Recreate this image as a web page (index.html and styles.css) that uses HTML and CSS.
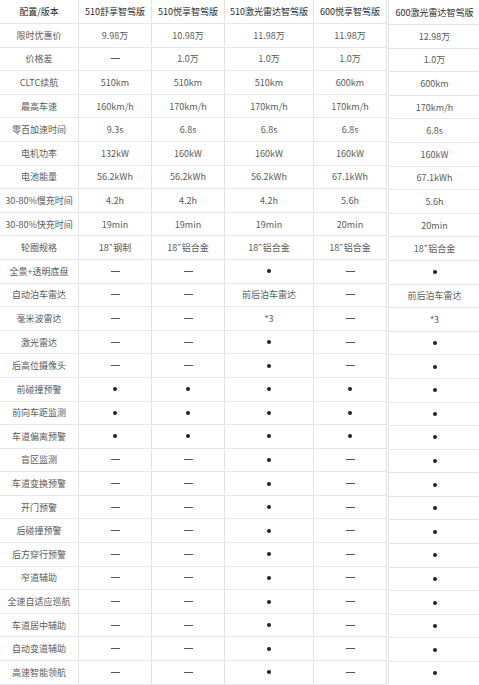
FILE: index.html
```html
<!DOCTYPE html>
<html lang="zh">
<head>
<meta charset="utf-8">
<link rel="stylesheet" href="styles.css">
</head>
<body>
<div class="wrap">
  <div class="main">
    <div class="c h">配置/版本</div><div class="c h">510舒享智驾版</div><div class="c h">510悦享智驾版</div><div class="c h">510激光雷达智驾版</div><div class="c h">600悦享智驾版</div>
    <div class="c">限时优惠价</div><div class="c">9.98万</div><div class="c">10.98万</div><div class="c">11.98万</div><div class="c">11.98万</div>
    <div class="c">价格差</div><div class="c"><span class="dash"></span></div><div class="c">1.0万</div><div class="c">1.0万</div><div class="c">1.0万</div>
    <div class="c">CLTC续航</div><div class="c">510km</div><div class="c">510km</div><div class="c">510km</div><div class="c">600km</div>
    <div class="c">最高车速</div><div class="c">160km/h</div><div class="c">170km/h</div><div class="c">170km/h</div><div class="c">170km/h</div>
    <div class="c">零百加速时间</div><div class="c">9.3s</div><div class="c">6.8s</div><div class="c">6.8s</div><div class="c">6.8s</div>
    <div class="c">电机功率</div><div class="c">132kW</div><div class="c">160kW</div><div class="c">160kW</div><div class="c">160kW</div>
    <div class="c">电池能量</div><div class="c">56.2kWh</div><div class="c">56.2kWh</div><div class="c">56.2kWh</div><div class="c">67.1kWh</div>
    <div class="c">30-80%慢充时间</div><div class="c">4.2h</div><div class="c">4.2h</div><div class="c">4.2h</div><div class="c">5.6h</div>
    <div class="c">30-80%快充时间</div><div class="c">19min</div><div class="c">19min</div><div class="c">19min</div><div class="c">20min</div>
    <div class="c">轮圈规格</div><div class="c">18<span class="q">”</span>钢制</div><div class="c">18<span class="q">”</span>铝合金</div><div class="c">18<span class="q">”</span>铝合金</div><div class="c">18<span class="q">”</span>铝合金</div>
    <div class="c">全景+透明底盘</div><div class="c"><span class="dash"></span></div><div class="c"><span class="dash"></span></div><div class="c"><span class="dot"></span></div><div class="c"><span class="dash"></span></div>
    <div class="c">自动泊车雷达</div><div class="c"><span class="dash"></span></div><div class="c"><span class="dash"></span></div><div class="c">前后泊车雷达</div><div class="c"><span class="dash"></span></div>
    <div class="c">毫米波雷达</div><div class="c"><span class="dash"></span></div><div class="c"><span class="dash"></span></div><div class="c">*3</div><div class="c"><span class="dash"></span></div>
    <div class="c">激光雷达</div><div class="c"><span class="dash"></span></div><div class="c"><span class="dash"></span></div><div class="c"><span class="dot"></span></div><div class="c"><span class="dash"></span></div>
    <div class="c">后高位摄像头</div><div class="c"><span class="dash"></span></div><div class="c"><span class="dash"></span></div><div class="c"><span class="dot"></span></div><div class="c"><span class="dash"></span></div>
    <div class="c">前碰撞预警</div><div class="c"><span class="dot"></span></div><div class="c"><span class="dot"></span></div><div class="c"><span class="dot"></span></div><div class="c"><span class="dot"></span></div>
    <div class="c">前向车距监测</div><div class="c"><span class="dot"></span></div><div class="c"><span class="dot"></span></div><div class="c"><span class="dot"></span></div><div class="c"><span class="dot"></span></div>
    <div class="c">车道偏离预警</div><div class="c"><span class="dot"></span></div><div class="c"><span class="dot"></span></div><div class="c"><span class="dot"></span></div><div class="c"><span class="dot"></span></div>
    <div class="c">盲区监测</div><div class="c"><span class="dash"></span></div><div class="c"><span class="dash"></span></div><div class="c"><span class="dot"></span></div><div class="c"><span class="dash"></span></div>
    <div class="c">车道变换预警</div><div class="c"><span class="dash"></span></div><div class="c"><span class="dash"></span></div><div class="c"><span class="dot"></span></div><div class="c"><span class="dash"></span></div>
    <div class="c">开门预警</div><div class="c"><span class="dash"></span></div><div class="c"><span class="dash"></span></div><div class="c"><span class="dot"></span></div><div class="c"><span class="dash"></span></div>
    <div class="c">后碰撞预警</div><div class="c"><span class="dash"></span></div><div class="c"><span class="dash"></span></div><div class="c"><span class="dot"></span></div><div class="c"><span class="dash"></span></div>
    <div class="c">后方穿行预警</div><div class="c"><span class="dash"></span></div><div class="c"><span class="dash"></span></div><div class="c"><span class="dot"></span></div><div class="c"><span class="dash"></span></div>
    <div class="c">窄道辅助</div><div class="c"><span class="dash"></span></div><div class="c"><span class="dash"></span></div><div class="c"><span class="dot"></span></div><div class="c"><span class="dash"></span></div>
    <div class="c">全速自适应巡航</div><div class="c"><span class="dash"></span></div><div class="c"><span class="dash"></span></div><div class="c"><span class="dot"></span></div><div class="c"><span class="dash"></span></div>
    <div class="c">车道居中辅助</div><div class="c"><span class="dash"></span></div><div class="c"><span class="dash"></span></div><div class="c"><span class="dot"></span></div><div class="c"><span class="dash"></span></div>
    <div class="c">自动变道辅助</div><div class="c"><span class="dash"></span></div><div class="c"><span class="dash"></span></div><div class="c"><span class="dot"></span></div><div class="c"><span class="dash"></span></div>
    <div class="c">高速智能领航</div><div class="c"><span class="dash"></span></div><div class="c"><span class="dash"></span></div><div class="c"><span class="dot"></span></div><div class="c"><span class="dash"></span></div>
  </div>
  <div class="side">
    <div class="c h">600激光雷达智驾版</div>
    <div class="c">12.98万</div>
    <div class="c">1.0万</div>
    <div class="c">600km</div>
    <div class="c">170km/h</div>
    <div class="c">6.8s</div>
    <div class="c">160kW</div>
    <div class="c">67.1kWh</div>
    <div class="c">5.6h</div>
    <div class="c">20min</div>
    <div class="c">18<span class="q">”</span>铝合金</div>
    <div class="c"><span class="dot"></span></div>
    <div class="c">前后泊车雷达</div>
    <div class="c">*3</div>
    <div class="c"><span class="dot"></span></div>
    <div class="c"><span class="dot"></span></div>
    <div class="c"><span class="dot"></span></div>
    <div class="c"><span class="dot"></span></div>
    <div class="c"><span class="dot"></span></div>
    <div class="c"><span class="dot"></span></div>
    <div class="c"><span class="dot"></span></div>
    <div class="c"><span class="dot"></span></div>
    <div class="c"><span class="dot"></span></div>
    <div class="c"><span class="dot"></span></div>
    <div class="c"><span class="dot"></span></div>
    <div class="c"><span class="dot"></span></div>
    <div class="c"><span class="dot"></span></div>
    <div class="c"><span class="dot"></span></div>
    <div class="c"><span class="dot"></span></div>
  </div>
</div>
</body>
</html>
```
FILE: styles.css
```css
html, body {
  margin: 0;
  padding: 0;
  background: #fff;
  overflow: hidden;
}
body {
  font-family: "Noto Sans CJK SC", "Noto Sans", sans-serif;
  font-size: 9px;
  color: #5a5a5a;
}
.wrap {
  display: flex;
  align-items: flex-start;
  gap: 1px;
}
.main {
  display: grid;
  grid-template-columns: 79px 73px 73px 89px 73px;
  grid-template-rows: 24px;
  grid-auto-rows: 23.6px;
  flex: none;
}
.side {
  display: grid;
  grid-template-columns: 91px;
  grid-template-rows: 25px;
  grid-auto-rows: 23.6px;
  border-left: 1px solid #e3e3e3;
  flex: none;
}
.c {
  display: flex;
  align-items: center;
  justify-content: center;
  text-align: center;
  white-space: nowrap;
  border-bottom: 1px solid #e8e8e8;
  box-sizing: border-box;
  line-height: 1;
}
.main .c {
  border-right: 1px solid #e3e3e3;
}
.h {
  color: #2a2a2a;
}
.q {
  font-family: "Liberation Sans", sans-serif;
  margin: 0 1px 0 0.5px;
}
.dash {
  display: block;
  width: 9px;
  height: 1px;
  background: #555;
}
.dot {
  display: block;
  width: 4px;
  height: 4px;
  border-radius: 50%;
  background: #222;
}
```
